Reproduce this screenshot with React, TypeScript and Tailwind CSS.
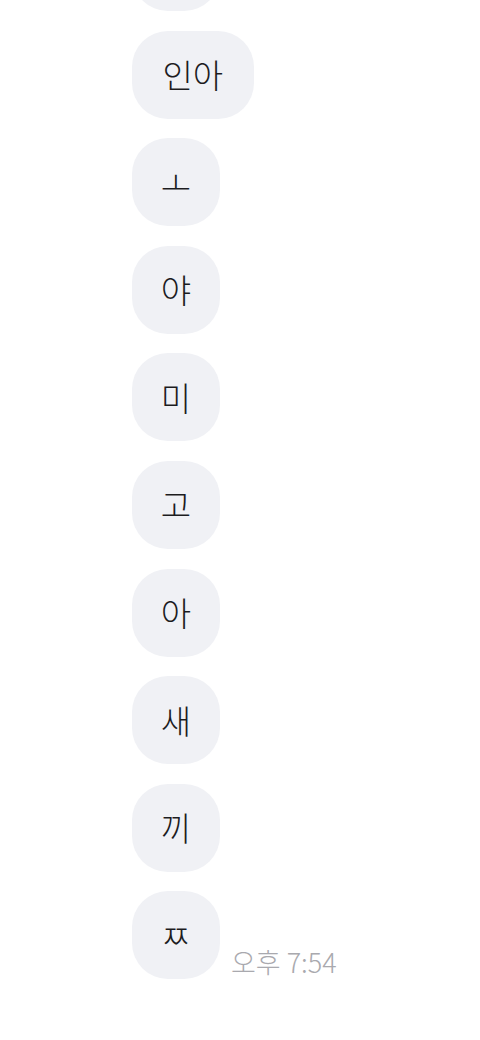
const messages = ['', '인아', 'ㅗ', '야', '미', '고', '아', '새', '끼']

function Bubble({ text }: { text: string }) {
  const wide = text.length > 1
  return (
    <div
      className={
        (wide ? 'px-[30.5px] ' : 'w-[88px] ') +
        'h-[88px] rounded-[36px] bg-[#f0f1f5] flex items-center justify-center text-[33px] font-light leading-none text-[#1c1c1e]'
      }
    >
      {text}
    </div>
  )
}

export default function App() {
  return (
    <div
      className="h-[1040px] overflow-hidden bg-white"
      style={{ fontFamily: '"Noto Sans CJK KR", "Noto Sans", sans-serif' }}
    >
      <div className="flex flex-col items-start gap-[19.6px] pl-[132px] -mt-[77px]">
        {messages.map((m, i) => (
          <Bubble key={i} text={m} />
        ))}
        <div className="flex items-end gap-[11px]">
          <Bubble text="ㅉ" />
          <span className="mb-[4px] text-[27px] font-light leading-none text-[#a9a9ae]">오후 7:54</span>
        </div>
      </div>
    </div>
  )
}
